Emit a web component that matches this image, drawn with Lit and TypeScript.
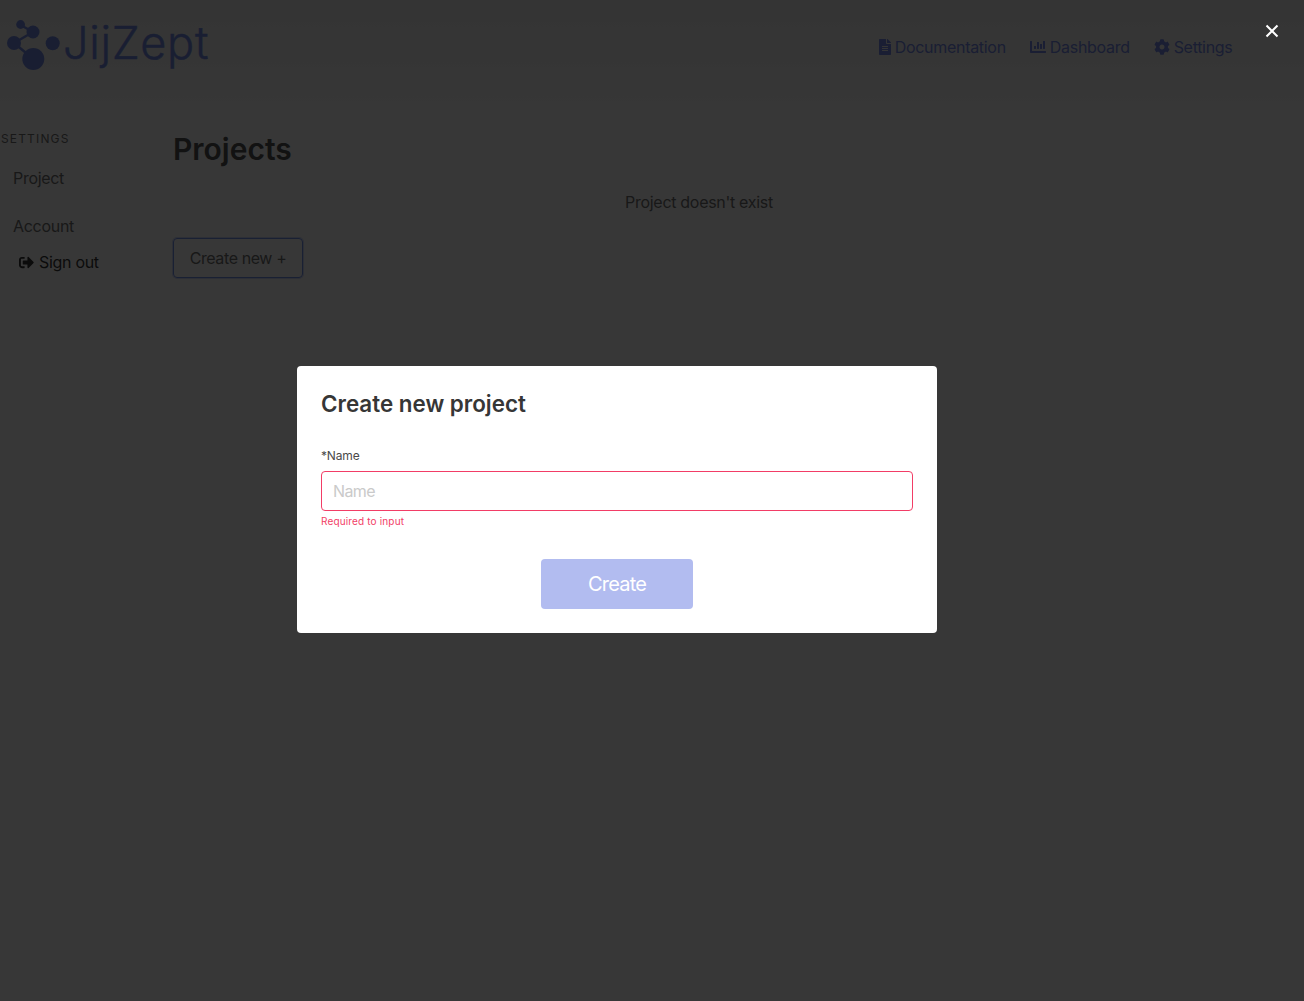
import { LitElement, html, css, svg } from "lit";
import { customElement } from "lit/decorators.js";

const FILE = svg`<path d="M224 136V0H24C10.7 0 0 10.7 0 24v464c0 13.3 10.7 24 24 24h336c13.3 0 24-10.7 24-24V160H248c-13.2 0-24-10.8-24-24zm64 236c0 6.6-5.4 12-12 12H108c-6.6 0-12-5.4-12-12v-8c0-6.6 5.4-12 12-12h168c6.6 0 12 5.4 12 12v8zm0-64c0 6.6-5.4 12-12 12H108c-6.6 0-12-5.4-12-12v-8c0-6.6 5.4-12 12-12h168c6.6 0 12 5.4 12 12v8zm0-72v8c0 6.6-5.4 12-12 12H108c-6.6 0-12-5.4-12-12v-8c0-6.6 5.4-12 12-12h168c6.6 0 12 5.4 12 12zm96-114.1v6.1H256V0h6.1c6.4 0 12.5 2.5 17 7l97.9 98c4.5 4.5 7 10.6 7 16.9z"/>`;
const CHART = svg`<path d="M332.8 320h38.4c6.4 0 12.8-6.4 12.8-12.8V172.8c0-6.4-6.4-12.8-12.8-12.8h-38.4c-6.4 0-12.8 6.4-12.8 12.8v134.4c0 6.4 6.4 12.8 12.8 12.8zm96 0h38.4c6.4 0 12.8-6.4 12.8-12.8V76.8c0-6.4-6.4-12.8-12.8-12.8h-38.4c-6.4 0-12.8 6.4-12.8 12.8v230.4c0 6.4 6.4 12.8 12.8 12.8zm-288 0h38.4c6.4 0 12.8-6.4 12.8-12.8v-70.4c0-6.4-6.4-12.8-12.8-12.8h-38.4c-6.4 0-12.8 6.4-12.8 12.8v70.4c0 6.4 6.4 12.8 12.8 12.8zm96 0h38.4c6.4 0 12.8-6.4 12.8-12.8V108.8c0-6.4-6.4-12.8-12.8-12.8h-38.4c-6.4 0-12.8 6.4-12.8 12.8v198.4c0 6.4 6.4 12.8 12.8 12.8zM496 384H64V80c0-8.84-7.16-16-16-16H16C7.16 64 0 71.16 0 80v336c0 17.67 14.33 32 32 32h464c8.84 0 16-7.16 16-16v-32c0-8.84-7.16-16-16-16z"/>`;
const COG = svg`<path d="M487.4 315.7l-42.6-24.6c4.3-23.2 4.3-47 0-70.2l42.6-24.6c4.9-2.8 7.1-8.6 5.5-14-11.1-35.6-30-67.8-54.7-94.6-3.8-4.1-10-5.1-14.8-2.3L380.8 110c-17.9-15.4-38.5-27.3-60.8-35.1V25.8c0-5.6-3.9-10.5-9.4-11.7-36.7-8.2-74.3-7.8-109.2 0-5.5 1.2-9.4 6.1-9.4 11.7V75c-22.2 7.9-42.8 19.8-60.8 35.1L88.7 85.5c-4.9-2.8-11-1.9-14.8 2.3-24.7 26.7-43.6 58.9-54.7 94.6-1.7 5.4.6 11.2 5.5 14L67.3 221c-4.3 23.2-4.3 47 0 70.2l-42.6 24.6c-4.9 2.8-7.1 8.6-5.5 14 11.1 35.6 30 67.8 54.7 94.6 3.8 4.1 10 5.1 14.8 2.3l42.6-24.6c17.9 15.4 38.5 27.3 60.8 35.1v49.2c0 5.6 3.9 10.5 9.4 11.7 36.7 8.2 74.3 7.8 109.2 0 5.5-1.2 9.4-6.1 9.4-11.7v-49.2c22.2-7.9 42.8-19.8 60.8-35.1l42.6 24.6c4.9 2.8 11 1.9 14.8-2.3 24.7-26.7 43.6-58.9 54.7-94.6 1.5-5.5-.7-11.3-5.6-14.1zM256 336c-44.1 0-80-35.9-80-80s35.9-80 80-80 80 35.9 80 80-35.9 80-80 80z"/>`;
const SIGNOUT = svg`<path d="M497 273L329 441c-15 15-41 4.5-41-17v-96H152c-13.3 0-24-10.7-24-24v-96c0-13.3 10.7-24 24-24h136V88c0-21.4 25.9-32 41-17l168 168c9.3 9.4 9.3 24.6 0 34zM192 436v-40c0-6.6-5.4-12-12-12H96c-17.7 0-32-14.3-32-32V160c0-17.7 14.3-32 32-32h84c6.6 0 12-5.4 12-12V76c0-6.6-5.4-12-12-12H96c-53 0-96 43-96 96v192c0 53 43 96 96 96h84c6.6 0 12-5.4 12-12z"/>`;

@customElement("app-root")
export class AppRoot extends LitElement {
  static styles = css`
    :host {
      display: block;
      position: relative;
      min-height: 1001px;
      background: linear-gradient(#ececec 0, #ffffff 130px);
      color: #585858;
      font-family: Inter, "Liberation Sans", sans-serif;
      font-size: 16px;
      letter-spacing: -0.3px;
      overflow: hidden;
    }
    .header {
      display: flex;
      align-items: flex-start;
      justify-content: space-between;
      height: 94px;
      box-sizing: border-box;
    }
    .logo {
      display: flex;
      align-items: flex-start;
      margin: 20px 0 0 7px;
      color: #5c78e0;
    }
    .logo svg { width: 58px; height: 50px; display: block; }
    .wordmark {
      font-weight: 300;
      font-size: 45px;
      line-height: 50px;
      letter-spacing: 0.7px;
      margin: -2px 0 0 -2px;
      -webkit-text-stroke: 0.5px currentColor;
    }
    .nav {
      display: flex;
      gap: 24px;
      margin: 37px 71.5px 0 0;
      color: #6078e8;
      line-height: 20px;
    }
    .nav a { display: flex; align-items: center; gap: 4px; }
    .nav svg { height: 16px; display: block; fill: currentColor; }
    .main { display: flex; }
    .side { width: 173px; flex: none; box-sizing: border-box; padding: 37px 0 0 1px; }
    .side h4 {
      margin: 0;
      font-size: 12px;
      font-weight: 400;
      letter-spacing: 1.15px;
      line-height: 16px;
    }
    .side .item { margin: 0 0 0 12px; line-height: 20px; }
    .side .project { margin-top: 21px; }
    .side .account { margin-top: 28px; }
    .signout {
      display: flex;
      align-items: center;
      gap: 5px;
      margin: 16px 0 0 18px;
      line-height: 20px;
      color: #111111;
    }
    .signout svg { width: 15px; height: 15px; fill: currentColor; }
    .content { flex: 1; margin-right: 79px; padding-top: 36px; }
    .content h1 {
      margin: 0;
      font-size: 30px;
      font-weight: 600;
      letter-spacing: 0;
      line-height: 38px;
      color: #363636;
    }
    .empty { text-align: center; margin-top: 24px; line-height: 20px; }
    .create-btn {
      display: inline-flex;
      align-items: center;
      justify-content: center;
      box-sizing: border-box;
      width: 130px;
      height: 40px;
      margin-top: 26px;
      border: 1px solid #5f80e8;
      border-radius: 4px;
      box-shadow: 0 0 0 1px rgba(95, 128, 232, 0.35);
      letter-spacing: -0.4px;
    }
    .overlay {
      position: fixed;
      inset: 0;
      background: rgba(10, 10, 10, 0.815);
      display: flex;
      align-items: center;
      justify-content: center;
      padding: 0 70px 2px 0;
    }
    .close {
      position: absolute;
      top: 24px;
      left: 1265px;
      width: 14px;
      height: 14px;
    }
    .close svg { display: block; width: 14px; height: 14px; stroke: #fff; stroke-width: 2; fill: none; }
    .modal {
      width: 640px;
      box-sizing: border-box;
      background: #fff;
      border-radius: 4px;
      padding: 24px;
      color: #363636;
    }
    .modal h2 {
      margin: 0;
      font-size: 22.4px;
      line-height: 28px;
      font-weight: 600;
      letter-spacing: 0;
      color: #363636;
    }
    .label {
      display: block;
      margin-top: 30px;
      font-size: 12px;
      line-height: 16px;
      letter-spacing: -0.15px;
      color: #4a4a4a;
    }
    .input {
      display: flex;
      align-items: center;
      box-sizing: border-box;
      height: 40px;
      margin-top: 7px;
      padding: 0 11px;
      border: 1px solid #f23d66;
      border-radius: 4px;
      color: #cacaca;
      font-size: 16px;
      letter-spacing: -0.6px;
    }
    .error {
      margin-top: 3px;
      font-size: 10px;
      line-height: 14px;
      letter-spacing: 0.15px;
      color: #f23d66;
    }
    .actions { display: flex; justify-content: center; margin-top: 31px; }
    .submit {
      display: flex;
      align-items: center;
      justify-content: center;
      width: 152px;
      height: 50px;
      background: #b2bcf0;
      border-radius: 4px;
      color: #fff;
      font-size: 20px;
      letter-spacing: -0.8px;
    }
  `;

  render() {
    return html`
      <header class="header">
        <div class="logo">
          <svg viewBox="0 0 58 50" fill="currentColor" stroke="currentColor">
            <line x1="13.6" y1="5" x2="26" y2="12" stroke-width="2.5"/>
            <line x1="26" y1="12" x2="7" y2="23" stroke-width="2.5"/>
            <line x1="7" y1="23" x2="26.3" y2="39" stroke-width="2.5"/>
            <circle cx="13.6" cy="4.5" r="4.4" stroke="none"/>
            <circle cx="26" cy="12" r="6.5" stroke="none"/>
            <circle cx="7" cy="23" r="7" stroke="none"/>
            <circle cx="45.7" cy="23.3" r="7" stroke="none"/>
            <circle cx="26.3" cy="39" r="11" stroke="none"/>
          </svg>
          <span class="wordmark">JijZept</span>
        </div>
        <nav class="nav">
          <a><svg viewBox="0 0 384 512">${FILE}</svg>Documentation</a>
          <a><svg viewBox="0 0 512 512">${CHART}</svg>Dashboard</a>
          <a><svg viewBox="0 0 512 512">${COG}</svg>Settings</a>
        </nav>
      </header>
      <div class="main">
        <aside class="side">
          <h4>SETTINGS</h4>
          <div class="item project">Project</div>
          <div class="item account">Account</div>
          <div class="signout"><svg viewBox="0 0 512 512">${SIGNOUT}</svg>Sign out</div>
        </aside>
        <section class="content">
          <h1>Projects</h1>
          <div class="empty">Project doesn't exist</div>
          <div class="create-btn">Create new +</div>
        </section>
      </div>
      <div class="overlay">
        <div class="close">
          <svg viewBox="0 0 14 14"><path d="M1.5 1.5l11 11M12.5 1.5l-11 11"/></svg>
        </div>
        <div class="modal">
          <h2>Create new project</h2>
          <label class="label">*Name</label>
          <div class="input">Name</div>
          <div class="error">Required to input</div>
          <div class="actions"><div class="submit">Create</div></div>
        </div>
      </div>
    `;
  }
}
